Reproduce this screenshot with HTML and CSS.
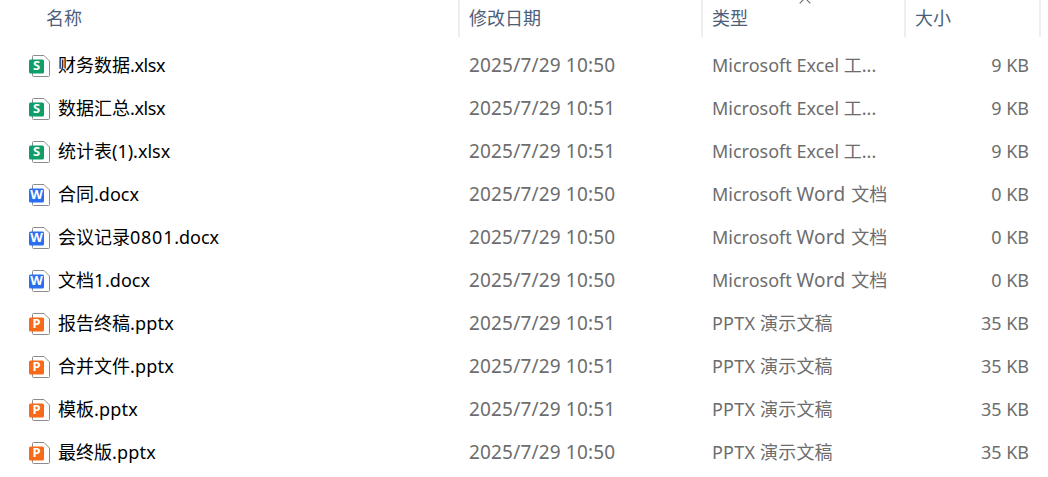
FILE: index.html

```html
<!DOCTYPE html>
<html lang="zh-CN">
<head>
    <meta charset="UTF-8">
    <title>文件列表</title>
    <link rel="stylesheet" href="styles.css">
</head>
<body>
    <svg class="defs" width="0" height="0">
        <symbol id="sheet" viewBox="0 0 24 24">
            <path d="M5.5 1.5a1 1 0 0 0-1 1v19a1 1 0 0 0 1 1h15a1 1 0 0 0 1-1V7l-5.5-5.5z" fill="#fff" stroke="#8c8c8c" stroke-width="1"/>
        </symbol>
    </svg>
    <div class="list">
        <header class="row head">
            <div class="cell name">名称</div>
            <div class="cell date">修改日期</div>
            <div class="cell type">类型<span class="caret"></span></div>
            <div class="cell size">大小</div>
        </header>
        <div class="row item"><div class="cell name"><svg class="icon" viewBox="0 0 24 24"><use href="#sheet"/><rect x="1" y="5.5" width="15" height="14" rx="1.5" fill="#0f9d68"/></svg><span class="letter">S</span><span>财务数据<span class="xlsx">.xlsx</span></span></div><div class="cell date">2025/7/29 10:50</div><div class="cell type">Microsoft Excel 工...</div><div class="cell size">9 KB</div></div>
        <div class="row item"><div class="cell name"><svg class="icon" viewBox="0 0 24 24"><use href="#sheet"/><rect x="1" y="5.5" width="15" height="14" rx="1.5" fill="#0f9d68"/></svg><span class="letter">S</span><span>数据汇总<span class="xlsx">.xlsx</span></span></div><div class="cell date">2025/7/29 10:51</div><div class="cell type">Microsoft Excel 工...</div><div class="cell size">9 KB</div></div>
        <div class="row item"><div class="cell name"><svg class="icon" viewBox="0 0 24 24"><use href="#sheet"/><rect x="1" y="5.5" width="15" height="14" rx="1.5" fill="#0f9d68"/></svg><span class="letter">S</span><span>统计表(1).xlsx</span></div><div class="cell date">2025/7/29 10:51</div><div class="cell type">Microsoft Excel 工...</div><div class="cell size">9 KB</div></div>
        <div class="row item"><div class="cell name"><svg class="icon" viewBox="0 0 24 24"><use href="#sheet"/><rect x="1" y="5.5" width="15" height="14" rx="1.5" fill="#2b6ff0"/></svg><span class="letter">W</span><span>合同.docx</span></div><div class="cell date">2025/7/29 10:50</div><div class="cell type">Microsoft <span class="word">Word</span> 文档</div><div class="cell size">0 KB</div></div>
        <div class="row item"><div class="cell name"><svg class="icon" viewBox="0 0 24 24"><use href="#sheet"/><rect x="1" y="5.5" width="15" height="14" rx="1.5" fill="#2b6ff0"/></svg><span class="letter">W</span><span>会议记录<span class="num">0801</span>.docx</span></div><div class="cell date">2025/7/29 10:50</div><div class="cell type">Microsoft <span class="word">Word</span> 文档</div><div class="cell size">0 KB</div></div>
        <div class="row item"><div class="cell name"><svg class="icon" viewBox="0 0 24 24"><use href="#sheet"/><rect x="1" y="5.5" width="15" height="14" rx="1.5" fill="#2b6ff0"/></svg><span class="letter">W</span><span>文档<span class="num">1</span>.docx</span></div><div class="cell date">2025/7/29 10:50</div><div class="cell type">Microsoft <span class="word">Word</span> 文档</div><div class="cell size">0 KB</div></div>
        <div class="row item"><div class="cell name"><svg class="icon" viewBox="0 0 24 24"><use href="#sheet"/><rect x="1" y="5.5" width="15" height="14" rx="1.5" fill="#f66a1a"/></svg><span class="letter">P</span><span>报告终稿<span class="pptx">.pptx</span></span></div><div class="cell date">2025/7/29 10:51</div><div class="cell type pptx-type">PPTX 演示文稿</div><div class="cell size">35 KB</div></div>
        <div class="row item"><div class="cell name"><svg class="icon" viewBox="0 0 24 24"><use href="#sheet"/><rect x="1" y="5.5" width="15" height="14" rx="1.5" fill="#f66a1a"/></svg><span class="letter">P</span><span>合并文件<span class="pptx">.pptx</span></span></div><div class="cell date">2025/7/29 10:51</div><div class="cell type pptx-type">PPTX 演示文稿</div><div class="cell size">35 KB</div></div>
        <div class="row item"><div class="cell name"><svg class="icon" viewBox="0 0 24 24"><use href="#sheet"/><rect x="1" y="5.5" width="15" height="14" rx="1.5" fill="#f66a1a"/></svg><span class="letter">P</span><span>模板<span class="pptx">.pptx</span></span></div><div class="cell date">2025/7/29 10:51</div><div class="cell type pptx-type">PPTX 演示文稿</div><div class="cell size">35 KB</div></div>
        <div class="row item"><div class="cell name"><svg class="icon" viewBox="0 0 24 24"><use href="#sheet"/><rect x="1" y="5.5" width="15" height="14" rx="1.5" fill="#f66a1a"/></svg><span class="letter">P</span><span>最终版<span class="pptx">.pptx</span></span></div><div class="cell date">2025/7/29 10:50</div><div class="cell type pptx-type">PPTX 演示文稿</div><div class="cell size">35 KB</div></div>
    </div>
</body>
</html>
```

FILE: styles.css

```css
html, body {
    margin: 0;
    padding: 0;
    background-color: #fff;
    overflow: hidden;
}

body {
    height: 477px;
    font-family: "Noto Sans", "Noto Sans CJK SC", sans-serif;
    font-size: 18px;
}

.defs {
    display: block;
}

.list {
    width: 1041px;
}

.row {
    display: grid;
    grid-template-columns: 460px 243px 203px 135px;
}

.head {
    height: 37px;
    margin-bottom: 7px;
    color: #4c607a;
}

.head .cell {
    position: relative;
    height: 37px;
    line-height: 37px;
    border-right: 2px solid #eeeeee;
    box-sizing: border-box;
    padding-left: 9px;
}

.head .name {
    padding-left: 46px;
}

.caret {
    position: absolute;
    top: -1px;
    left: 98px;
    width: 8px;
    height: 8px;
    border-left: 1px solid #666;
    border-top: 1px solid #666;
    box-sizing: border-box;
    transform: rotate(45deg);
}

.item {
    height: 43px;
    line-height: 43px;
    color: #6d6d6d;
}

.item .cell {
    white-space: nowrap;
    padding-left: 9px;
}

.item .date {
    font-size: 19px;
    letter-spacing: 0.17px;
}

.item .name {
    position: relative;
    display: flex;
    align-items: center;
    padding-left: 28px;
    color: #000;
}

.icon {
    width: 24px;
    height: 24px;
    margin-right: 6px;
    flex-shrink: 0;
}

.letter {
    position: absolute;
    left: 29px;
    top: 0;
    width: 15px;
    text-align: center;
    color: #fff;
    font-size: 13px;
    font-weight: 700;
    line-height: 43px;
}

.xlsx {
    letter-spacing: -0.4px;
}

.pptx {
    letter-spacing: 0.2px;
}

.num {
    letter-spacing: 0.75px;
}

.word {
    font-size: 19px;
    letter-spacing: 0.3px;
    margin-right: 1px;
}

.pptx-type {
    letter-spacing: 0.2px;
}

.item .size {
    text-align: right;
    padding-right: 12px;
}
```
